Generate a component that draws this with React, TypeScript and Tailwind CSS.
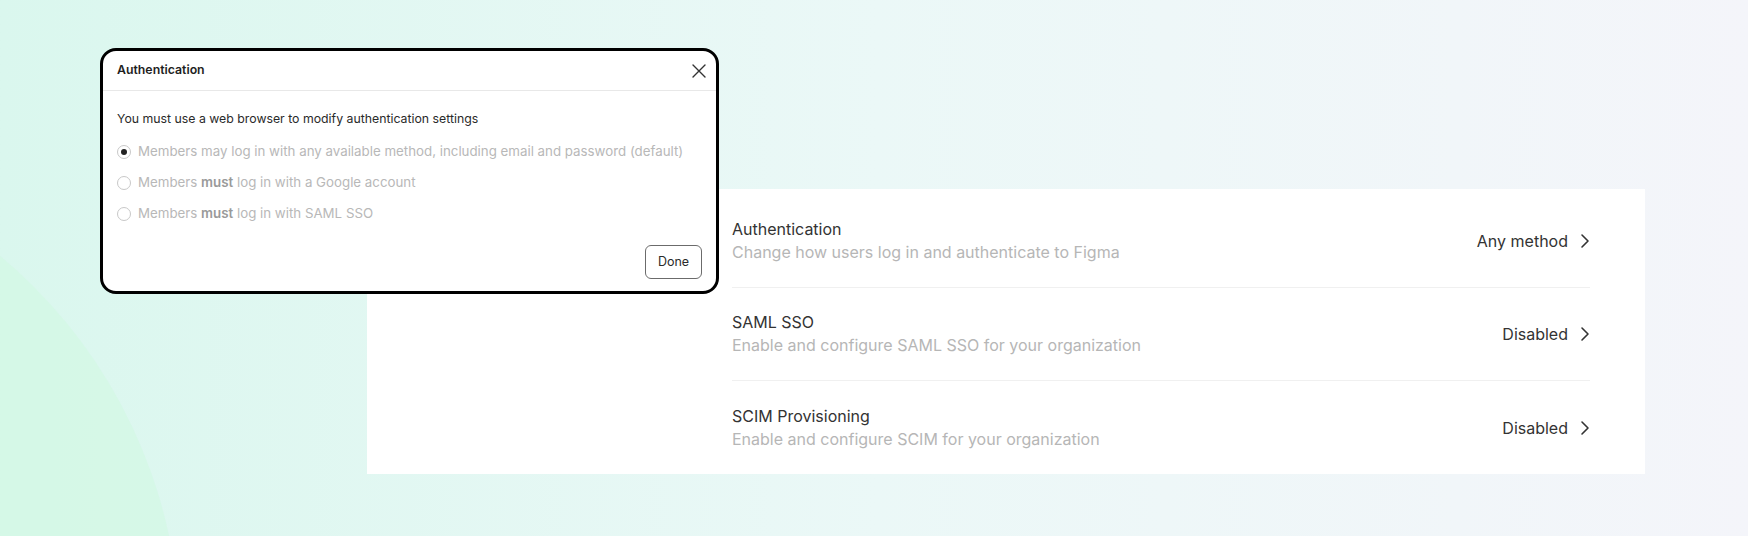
import React from 'react';

type Setting = {
  title: string;
  description: string;
  value: string;
};

const settings: Setting[] = [
  { title: 'Authentication', description: 'Change how users log in and authenticate to Figma', value: 'Any method' },
  { title: 'SAML SSO', description: 'Enable and configure SAML SSO for your organization', value: 'Disabled' },
  { title: 'SCIM Provisioning', description: 'Enable and configure SCIM for your organization', value: 'Disabled' },
];

const Chevron = () => (
  <svg width="10" height="16" viewBox="0 0 10 16" fill="none">
    <path d="M2 2l6 6-6 6" stroke="#333333" strokeWidth="1.6" strokeLinecap="round" strokeLinejoin="round" />
  </svg>
);

const CloseIcon = () => (
  <svg width="14" height="14" viewBox="0 0 14 14" fill="none">
    <path d="M1 1l12 12M13 1L1 13" stroke="#333333" strokeWidth="1.4" strokeLinecap="round" />
  </svg>
);

const Radio = ({ checked }: { checked?: boolean }) => (
  <span className="flex h-[14px] w-[14px] shrink-0 items-center justify-center rounded-full border border-[#c8c8c8] bg-white">
    {checked && <span className="h-[6px] w-[6px] rounded-full bg-[#222]" />}
  </span>
);

const SettingRow = ({ setting, last }: { setting: Setting; last: boolean }) => (
  <div className={'flex h-[93px] items-center justify-between ' + (last ? '' : 'border-b border-[#f0f0f0]')}>
    <div className="flex flex-col gap-[2px]">
      <span className="text-[16px] leading-[21px] text-[#333]">{setting.title}</span>
      <span className="text-[16px] leading-[21px] text-[#b6b6b6]">{setting.description}</span>
    </div>
    <div className="flex items-center gap-[12px]">
      <span className="text-[16px] text-[#333]">{setting.value}</span>
      <Chevron />
    </div>
  </div>
);

const AuthDialog = () => {
  return (
    <div className="absolute left-[100px] top-[48px] w-[619px] overflow-hidden rounded-[16px] border-[3px] border-black bg-white">
      <div className="flex h-[40px] items-center justify-between border-b border-[#e8e8e8] pl-[14px] pr-[10px]">
        <span className="text-[12.3px] font-semibold text-[#1e1e1e]">Authentication</span>
        <CloseIcon />
      </div>
      <div className="px-[14px] pt-[20px] pb-[12px]">
        <p className="text-[12.3px] leading-[16px] text-[#2a2a2a]">You must use a web browser to modify authentication settings</p>
        <div className="mt-[9px] flex flex-col">
          <label className="flex h-[31px] items-center gap-[7px] text-[13.3px] text-[#b8b8b8]">
            <Radio checked />
            Members may log in with any available method, including email and password (default)
          </label>
          <label className="flex h-[31px] items-center gap-[7px] text-[13.3px] text-[#b8b8b8]">
            <Radio />
            <span>
              Members <span className="font-semibold text-[#9a9a9a]">must</span> log in with a Google account
            </span>
          </label>
          <label className="flex h-[31px] items-center gap-[7px] text-[13.3px] text-[#b8b8b8]">
            <Radio />
            <span>
              Members <span className="font-semibold text-[#9a9a9a]">must</span> log in with SAML SSO
            </span>
          </label>
        </div>
        <div className="mt-[16px] flex justify-end">
          <button className="h-[34px] w-[57px] rounded-[6px] border border-[#6b6b6b] text-[12.5px] text-[#2a2a2a]">Done</button>
        </div>
      </div>
    </div>
  );
};

export default function App() {
  return (
    <div className="relative h-[536px] w-full overflow-hidden bg-linear-to-r from-[#daf7ee] via-[#ebf8f7] to-[#f4f5fa] font-[Inter,sans-serif]">
      <div className="pointer-events-none absolute -left-[820px] top-[140px] h-[1300px] w-[1000px] rounded-full bg-[#d3f8e4] opacity-70" />
      <div className="relative ml-[367px] mt-[189px] w-[1278px] bg-white pt-[6px] pl-[365px] pr-[55px]">
        {settings.map((s, i) => (
          <SettingRow key={s.title} setting={s} last={i === settings.length - 1} />
        ))}
      </div>
      <AuthDialog />
    </div>
  );
}
